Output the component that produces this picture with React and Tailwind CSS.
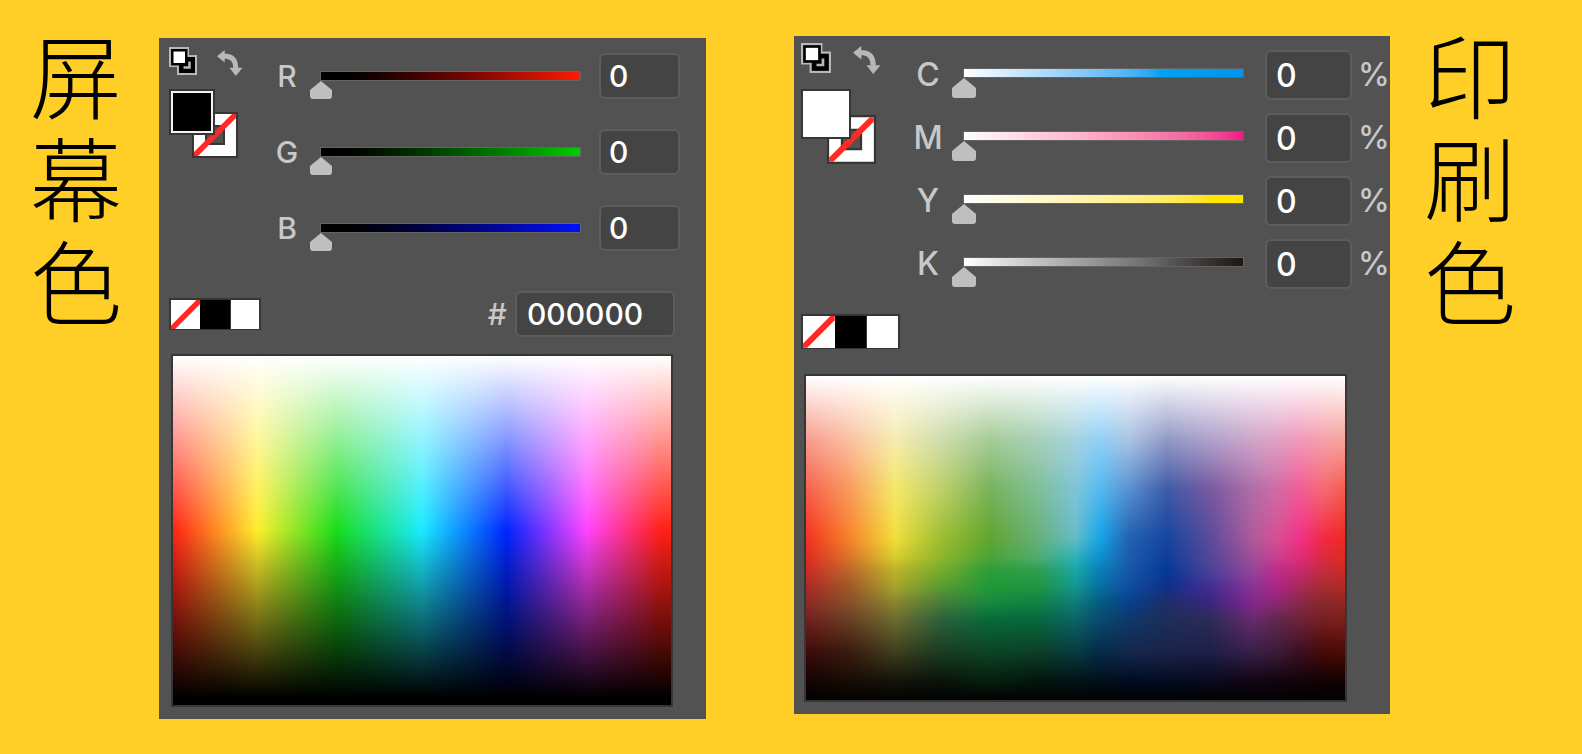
import clsx from "clsx";
import { useState } from "react";

const RGB_CHANNELS = [
  { name: "R", track: "from-black to-[#ff1c00]" },
  { name: "G", track: "from-black to-[#00cf00]" },
  { name: "B", track: "from-black to-[#0010ff]" },
];

const CMYK_CHANNELS = [
  { name: "C", track: "from-white via-[#00a4f0] via-70% to-[#0094ee]" },
  { name: "M", track: "from-white via-[#f573a5] via-75% to-[#f0148a]" },
  { name: "Y", track: "from-white via-[#ffe500] via-88% to-[#ffe500]" },
  { name: "K", track: "from-white via-[#6f6f6f] via-65% to-[#1c1613]" },
];

// Column positions (in %) shared by every row of the CMYK spectrum.
const CMYK_COLUMNS = [0, 8, 16.5, 25, 34, 43, 50, 54.5, 60, 67, 75, 83, 87.5, 91.5, 96, 100];

const CMYK_ROWS = [
  { at: 0, colors: ["#ffffff"] },
  { at: 20, colors: ["#f79a8c", "#fbbfa0", "#f5ecad", "#cfdcab", "#a5cb96", "#a6cfb8", "#a3d2e0", "#8fd0f8", "#a9c2e2", "#9097c6", "#aea0cb", "#cfa4c8", "#dfa1c2", "#f197bb", "#f59fa8", "#f7a39b"] },
  { at: 35, colors: ["#f7604f", "#f99a5c", "#f5e86a", "#bfd069", "#78b35a", "#7fbf98", "#80c4d8", "#56baf0", "#5a90d0", "#3f5ba8", "#78599f", "#b06ea8", "#d26aa5", "#f25c98", "#f56a72", "#f55c4c"] },
  { at: 50, colors: ["#f2321f", "#f8822a", "#f2de3c", "#9dbf32", "#62a52f", "#66b07a", "#66bcc8", "#16a6e8", "#2262b0", "#17459f", "#5a4c9b", "#b25a9b", "#d84f92", "#f0338a", "#f32a45", "#ef2a1e"] },
  { at: 56, colors: ["#e02b20", "#da742a", "#d8cc2e", "#8fb52c", "#4aa436", "#50ac70", "#2ab2b8", "#0f90cc", "#1b5cab", "#0f3e9b", "#524898", "#a14d98", "#cb3f90", "#e02c78", "#dc2a40", "#e02a1e"] },
  { at: 60, colors: ["#cc2c24", "#bc662a", "#bdb228", "#78ac2c", "#2c9c38", "#2e9e50", "#18a6a4", "#0880b8", "#1857a6", "#04389a", "#4a4398", "#96459a", "#bf2c88", "#c42a70", "#c62c3c", "#cc2a20"] },
  { at: 65, colors: ["#ac2a24", "#a0582a", "#a8a42c", "#5a9c30", "#209a38", "#209640", "#149690", "#0870a0", "#104da0", "#10308a", "#442c92", "#8a3494", "#ae2486", "#a82a5c", "#a82c30", "#b02c26"] },
  { at: 70, colors: ["#8e2824", "#865028", "#8a8430", "#4a7c3a", "#188840", "#128044", "#107c78", "#045c80", "#06408c", "#1e2e66", "#3c2680", "#84268c", "#8c2870", "#88284c", "#88282a", "#922620"] },
  { at: 75, colors: ["#722020", "#6a4024", "#6e6c30", "#2e623a", "#066c3a", "#066a3e", "#0c6468", "#0a4c70", "#10386a", "#1c2e5a", "#2e2c58", "#6a2a70", "#62284e", "#70243a", "#782022", "#7e1f1c"] },
  { at: 85, colors: ["#3e0c0a", "#3a1c10", "#40401f", "#1c3c22", "#0c4426", "#0c4028", "#083c40", "#052c48", "#14284e", "#1b2448", "#1e1f48", "#3a2048", "#3c1c38", "#3c1024", "#480a08", "#500a06"] },
  { at: 94, colors: ["#140402", "#190c05", "#15150a", "#0a140c", "#06200f", "#05160e", "#041418", "#02101c", "#020c22", "#040c22", "#0a0a20", "#130618", "#14040f", "#140408", "#120304", "#140202"] },
  { at: 100, colors: ["#020202"] },
];

function DefaultColorsIcon({ className }) {
  return (
    <svg viewBox="0 0 28 28" className={className} aria-hidden="true">
      <path d="M0 0H20V8H28V28H8V20H0Z" fill="#b8b8b8" />
      <path d="M10 10H26V26H10Z" fill="#000" />
      <path d="M14.5 20.5H20.5V14.5" fill="none" stroke="#b8b8b8" strokeWidth="2.5" />
      <path d="M2 2H18.5V18.5H2Z" fill="#000" />
      <path d="M4.5 4.5H16V16H4.5Z" fill="#fff" />
    </svg>
  );
}

function SwapIcon({ className }) {
  return (
    <svg viewBox="0 0 27 27" className={className} aria-hidden="true">
      <path d="M0 6.5L8 0V13Z" fill="#b8b8b8" />
      <path d="M19.5 27L13 18.5H26.5Z" fill="#b8b8b8" />
      <path d="M7 6.5H10Q19.5 7.5 19.5 19" fill="none" stroke="#b8b8b8" strokeWidth="5" />
    </svg>
  );
}

function StrokeSwatchIcon() {
  return (
    <svg viewBox="0 0 46 46" className="block size-full" aria-hidden="true">
      <path d="M1 1H45V45H1Z" fill="#fff" stroke="#363636" strokeWidth="2" />
      <path d="M14 14H32V32H14Z" fill="#525252" stroke="#363636" strokeWidth="2" />
      <path d="M2 40L40 2H44V6L6 44H2Z" fill="#ff2a26" />
    </svg>
  );
}

function FillStroke({ large }) {
  return (
    <div className="flex flex-col">
      <div className={clsx("flex items-start", large ? "gap-[22px]" : "gap-[20px]")}>
        <button type="button" aria-label="默认填色和描边">
          <DefaultColorsIcon className={large ? "block size-[30px]" : "block size-[28px]"} />
        </button>
        <button type="button" aria-label="互换填色和描边" className="pt-[3px]">
          <SwapIcon className={large ? "block size-[28px]" : "block size-[26px]"} />
        </button>
      </div>
      <div className={clsx("relative", large ? "mt-[15px] size-[75px]" : "mt-[13px] size-[69px]")}>
        <button
          type="button"
          aria-label="描边"
          className={clsx("absolute right-0 bottom-0", large ? "size-[49px]" : "size-[46px]")}
        >
          <StrokeSwatchIcon />
        </button>
        <button
          type="button"
          aria-label="填色"
          className={clsx(
            "absolute top-0 left-0 border-2 border-[#363636]",
            large ? "size-[50px] bg-white" : "size-[46px] bg-[#f2f2f2] p-[2px]"
          )}
        >
          {!large && <span className="block size-full bg-black" />}
        </button>
      </div>
    </div>
  );
}

function QuickSwatches({ className }) {
  return (
    <div className={clsx("grid grid-cols-3 border-2 border-[#363636] bg-[#363636]", className)}>
      <button type="button" aria-label="无" className="bg-white">
        <svg viewBox="0 0 30 30" preserveAspectRatio="none" className="block size-full" aria-hidden="true">
          <path d="M0 26L26 0H30V4L4 30H0Z" fill="#ff2a26" />
        </svg>
      </button>
      <button type="button" aria-label="黑色" className="bg-black" />
      <button type="button" aria-label="白色" className="ml-px bg-white" />
    </div>
  );
}

function Channel({ name, track, large }) {
  const [value, setValue] = useState("0");
  const max = large ? 100 : 255;

  return (
    <div className={clsx("flex items-center", large ? "h-[50px]" : "h-[46px]")}>
      <label
        htmlFor={`channel-${name}`}
        className={clsx(
          "text-center font-medium text-[#c8c8c8]",
          large ? "w-[48px] text-[32px]" : "w-[46px] text-[30px]"
        )}
      >
        {name}
      </label>
      <div className={clsx("mt-[18px] flex min-w-0 flex-1 flex-col self-start", large ? "mr-[10px]" : "mr-[8px]")}>
        <div
          className={clsx(
            "h-[10px] border border-[#636363] bg-linear-to-r bg-origin-border",
            large ? "mx-[11px]" : "mx-[10px]",
            track
          )}
        />
        <input
          type="range"
          aria-label={name}
          min="0"
          max={max}
          value={Number(value) || 0}
          onChange={(e) => setValue(e.target.value)}
          className={clsx(
            "block w-full appearance-none bg-transparent [&::-webkit-slider-thumb]:appearance-none [&::-webkit-slider-thumb]:rounded-b-[3px] [&::-webkit-slider-thumb]:bg-[#bfbfbf] [&::-webkit-slider-thumb]:[clip-path:polygon(50%_0,100%_50%,100%_100%,0_100%,0_50%)]",
            large
              ? "h-[20px] [&::-webkit-slider-thumb]:h-[20px] [&::-webkit-slider-thumb]:w-[24px]"
              : "h-[18px] [&::-webkit-slider-thumb]:h-[18px] [&::-webkit-slider-thumb]:w-[22px]"
          )}
        />
      </div>
      <input
        id={`channel-${name}`}
        type="text"
        value={value}
        onChange={(e) => setValue(e.target.value)}
        className={clsx(
          "h-full rounded-md border-2 border-[#5d5d5d] bg-[#444] font-medium text-white",
          large ? "w-[87px] pl-[9px] text-[32px]" : "w-[81px] pl-[8px] text-[30px]"
        )}
      />
      {large && <span className="w-[37px] pl-[6px] text-[32px] font-medium text-[#c8c8c8]">%</span>}
    </div>
  );
}

function RgbSpectrum() {
  return (
    <div className="h-[353px] border-2 border-[#363636] bg-[linear-gradient(to_bottom,#fff,#fff0_50%,#0000_50%,#000_98%),linear-gradient(to_right,#ff2216,#ffee2e_17%,#18dd1c_33%,#1aebff_50%,#0025ff_67%,#ff44ff_83%,#ff2016_98%)]" />
  );
}

// Each row fades into the one below it, so the last row sits at the bottom of the stack.
function CmykSpectrum() {
  const layers = CMYK_ROWS.map((row, i) => {
    const next = CMYK_ROWS[i + 1];
    const stops = CMYK_COLUMNS.map((x, c) => `${row.colors[c] ?? row.colors[0]} ${x}%`).join(", ");
    const mask = next ? `linear-gradient(to bottom, #000 ${row.at}%, transparent ${next.at}%)` : "none";
    return { at: row.at, background: `linear-gradient(to right, ${stops})`, maskImage: mask };
  }).reverse();

  return (
    <div className="grid h-[328px] border-2 border-[#363636]">
      {layers.map(({ at, background, maskImage }) => (
        <div key={at} className="col-start-1 row-start-1" style={{ background, maskImage }} />
      ))}
    </div>
  );
}

function RgbPanel() {
  const [hex, setHex] = useState("000000");

  return (
    <section aria-label="RGB" className="mt-[2px] min-w-0 flex-[537] bg-[#525252] pb-[12px] pl-[10px]">
      <div className="flex pr-[26px]">
        <div className="w-[95px] pt-[9px]">
          <FillStroke />
        </div>
        <div className="flex flex-1 flex-col gap-[30px] pt-[15px]">
          {RGB_CHANNELS.map((channel) => (
            <Channel key={channel.name} {...channel} />
          ))}
        </div>
      </div>
      <div className="mt-[40px] flex items-center pr-[31px]">
        <QuickSwatches className="h-[32px] w-[92px]" />
        <label htmlFor="hex" className="mr-[8px] ml-auto text-[30px] font-medium text-[#c8c8c8]">
          #
        </label>
        <input
          id="hex"
          type="text"
          value={hex}
          onChange={(e) => setHex(e.target.value)}
          className="h-[46px] w-[160px] rounded-md border-2 border-[#5d5d5d] bg-[#444] pl-[10px] text-[30px] font-medium text-white"
        />
      </div>
      <div className="mt-[17px] mr-[33px] ml-[2px]">
        <RgbSpectrum />
      </div>
    </section>
  );
}

function CmykPanel() {
  return (
    <section aria-label="CMYK" className="min-w-0 flex-[589] bg-[#525252] pb-[12px] pl-[7px]">
      <div className="flex pr-px">
        <div className="w-[103px] pt-[7px]">
          <FillStroke large />
        </div>
        <div className="flex flex-1 flex-col gap-[13px] pt-[14px]">
          {CMYK_CHANNELS.map((channel) => (
            <Channel key={channel.name} {...channel} large />
          ))}
        </div>
      </div>
      <QuickSwatches className="mt-[25px] h-[35px] w-[99px]" />
      <div className="mt-[25px] mr-[43px] ml-[3px]">
        <CmykSpectrum />
      </div>
    </section>
  );
}

function VerticalTitle({ children }) {
  return (
    <h2 className="-mt-[16px] w-[94px] shrink-0 break-all font-['Noto_Sans_CJK_SC',sans-serif] text-[92px] leading-[103px] font-light text-black">
      {children}
    </h2>
  );
}

export default function App() {
  return (
    <main className="flex min-h-screen items-start bg-[#ffcf28] pt-[36px] pr-[64px] pb-[35px] pl-[30px] font-['Inter',sans-serif] leading-none">
      <VerticalTitle>屏幕色</VerticalTitle>
      <div className="mr-[34px] ml-[35px] flex min-w-0 flex-1 items-start gap-[88px]">
        <RgbPanel />
        <CmykPanel />
      </div>
      <VerticalTitle>印刷色</VerticalTitle>
    </main>
  );
}
